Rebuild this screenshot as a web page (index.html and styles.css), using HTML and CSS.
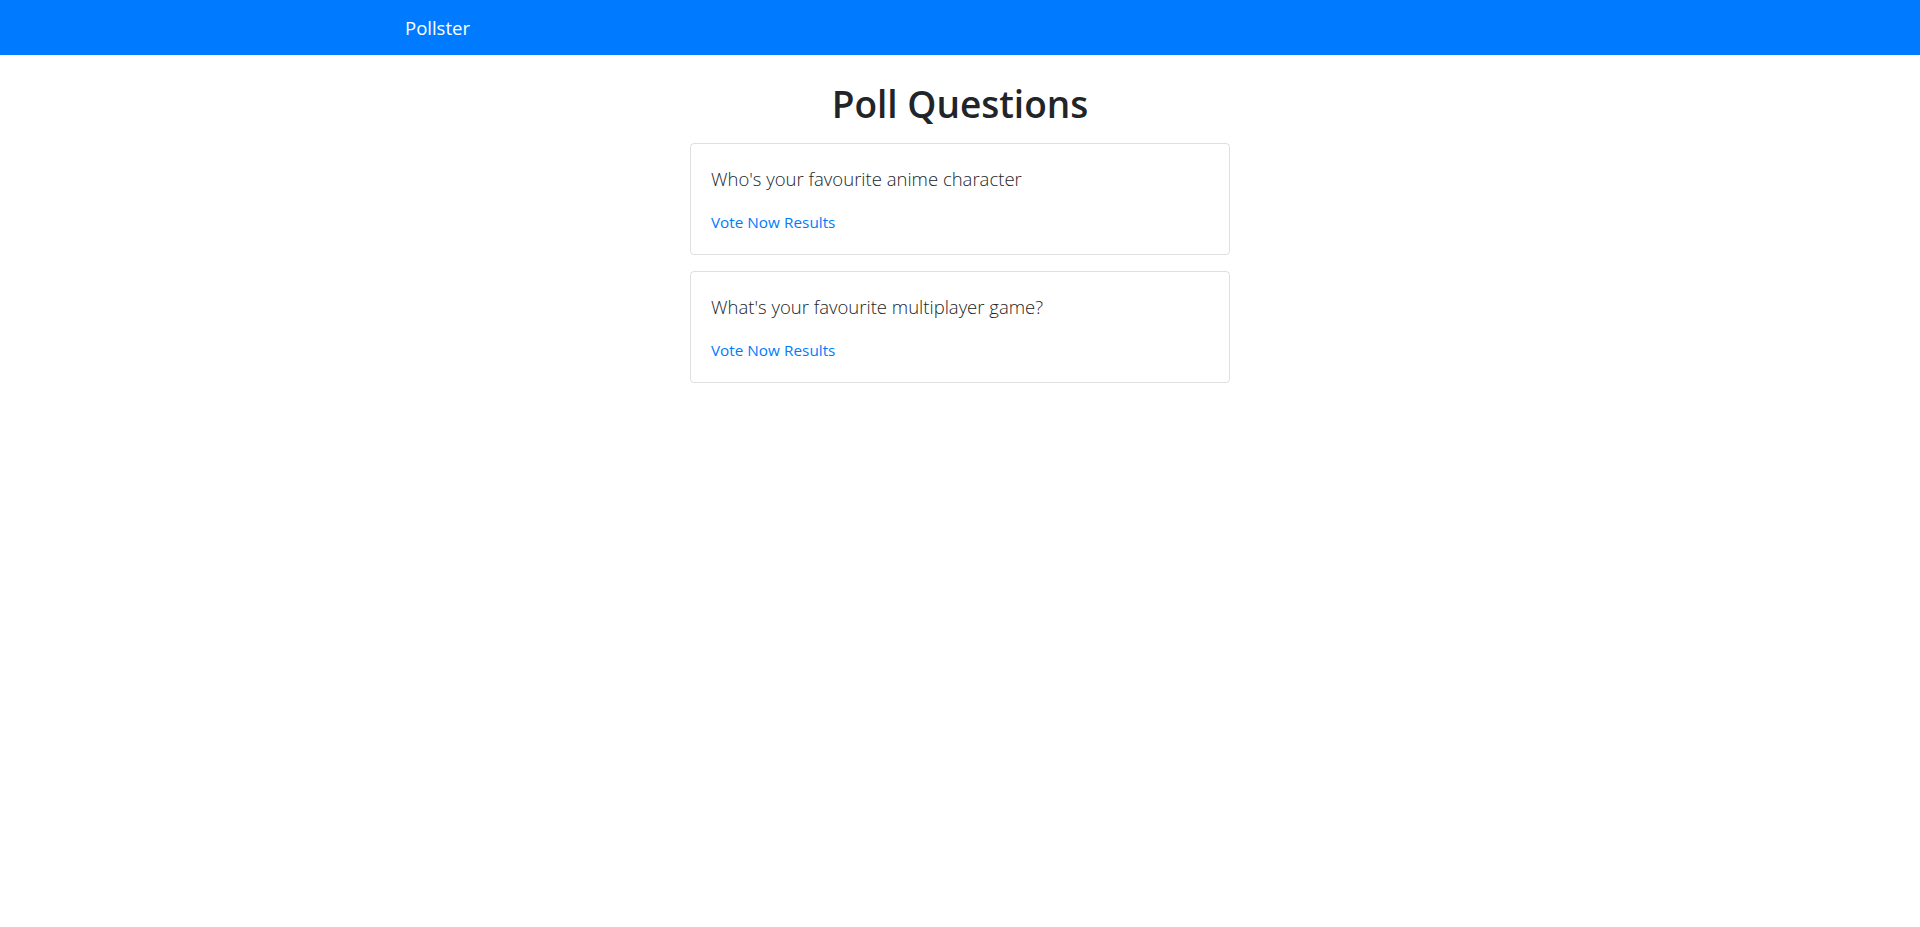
FILE: index.html
```html
<!DOCTYPE html>
<html lang="en">
<head>
<meta charset="utf-8">
<title>Pollster</title>
<link rel="stylesheet" href="styles.css">
</head>
<body>
<nav class="navbar">
  <div class="container">
    <a class="brand" href="#">Pollster</a>
  </div>
</nav>
<main class="container">
  <div class="column">
    <h1 class="title">Poll Questions</h1>
    <div class="card">
      <div class="card-body">
        <p class="lead">Who's your favourite anime character</p>
        <a class="card-link" href="#">Vote Now</a> <a class="card-link" href="#">Results</a>
      </div>
    </div>
    <div class="card">
      <div class="card-body">
        <p class="lead">What's your favourite multiplayer game?</p>
        <a class="card-link" href="#">Vote Now</a> <a class="card-link" href="#">Results</a>
      </div>
    </div>
  </div>
</main>
</body>
</html>
```
FILE: styles.css
```css
* { box-sizing: border-box; }
html, body {
  margin: 0;
  padding: 0;
  background: #fff;
  color: #212529;
  font-family: "Open Sans", "Noto Sans", "Liberation Sans", sans-serif;
  font-size: 16px;
  line-height: 1.5;
}
.container {
  width: 1140px;
  margin: 0 auto;
  padding: 0 15px;
}
.navbar {
  background: #007bff;
  padding: 8px 16px 7px;
  height: 55px;
}
.navbar .container {
  display: flex;
  align-items: center;
  height: 40px;
}
.brand {
  color: #fff;
  text-decoration: none;
  font-size: 18.5px;
  line-height: 30px;
  padding: 5px 0;
}
.column {
  width: 540px;
  margin: 0 auto;
}
.title {
  margin: 25px 0 15px;
  font-size: 37px;
  font-weight: 600;
  line-height: 48px;
  text-align: center;
  color: #212529;
}
.card {
  border: 1px solid rgba(0,0,0,.125);
  border-radius: 4px;
  margin-bottom: 16px;
}
.card-body {
  padding: 20px;
}
.lead {
  margin: 0 0 16px;
  font-size: 18.5px;
  font-weight: 300;
  line-height: 30px;
  color: #212529;
}
.card-link {
  color: #007bff;
  text-decoration: none;
  font-size: 15.3px;
  line-height: 24px;
}
```
